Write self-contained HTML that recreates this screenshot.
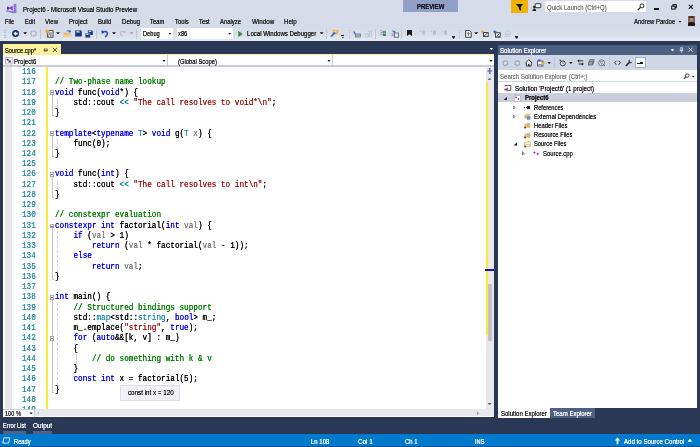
<!DOCTYPE html>
<html lang="en"><head><meta charset="utf-8"><title>Project6 - Microsoft Visual Studio Preview</title>
<style>
*{margin:0;padding:0;box-sizing:border-box}
html,body{width:700px;height:447px;overflow:hidden;background:#D6DBE9}
body{position:relative;font-family:"Liberation Sans",sans-serif;-webkit-font-smoothing:antialiased}
.a,.t,i{position:absolute;display:block}
.t{white-space:pre;font-style:normal;text-shadow:0 0 0.5px currentColor;transform-origin:0 50%}
#txt{position:absolute;left:0;top:0;width:700px;height:447px;will-change:transform}
svg{position:absolute;overflow:visible}
/* editor */
#ed{will-change:transform;position:absolute;left:3px;top:66px;width:482.5px;height:343.2px;background:#fff;overflow:hidden}
.ln{text-shadow:0 0 0.3px currentColor;position:absolute;left:0;height:10.242px;line-height:10.242px;white-space:pre;font-family:"Liberation Mono",monospace;font-size:8.25px;color:#000;width:480px}
.no{position:absolute;left:18.9px;color:#2B91AF;transform-origin:0 50%;transform:scaleX(0.9312)}
.cd{position:absolute;left:51.8px;transform-origin:0 50%;transform:scaleX(0.9312)}
.k{color:#0000FF}.c{color:#008000}.s{color:#A31515}.y{color:#2B91AF}.p{color:#808080}.o{color:#008080}
.fold{left:46.7px;width:4.6px;height:4.6px;border:0.8px solid #A8A8A8;background:#fff}
.fold:after{content:"";position:absolute;left:0.6px;right:0.6px;top:1.1px;height:0.8px;background:#777}
.og{left:48.9px;width:2.2px;border-left:0.8px solid #C4C4C4;border-bottom:0.8px solid #C4C4C4}
.sg{width:0;border-left:0.8px dashed #D4D4D4}
.grip{width:1.6px;height:9px;background:repeating-linear-gradient(#B4BCD1 0 0.8px,transparent 0.8px 1.8px)}
.td,.dd{clip-path:polygon(0 0,100% 0,50% 100%)}
.tu{clip-path:polygon(0 100%,100% 100%,50% 0)}
.tl{clip-path:polygon(100% 0,100% 100%,0 50%)}
.tr{clip-path:polygon(0 0,0 100%,100% 50%)}
.dd{width:3.8px;height:2.2px;background:#0A0A0A;margin:-0.1px 0 0 -0.3px}
.sep{top:28.8px;width:0.9px;height:10px;background:#BFC6D8}
.ov{width:3px;height:0.8px;background:#1E1E1E}
.ov:after{content:"";position:absolute;left:-0.1px;top:1.5px;width:3.2px;height:1.8px;background:#1E1E1E;clip-path:polygon(0 0,100% 0,50% 100%)}
.ex{width:3.4px;height:3.4px;background:#1E1E1E;clip-path:polygon(100% 0,100% 100%,0 100%)}
.co{width:2.8px;height:4.4px;background:#3A3A3A;clip-path:polygon(0 0,100% 50%,0 100%,0 0,22% 22%,22% 78%,70% 50%,22% 22%)}
</style></head><body>

<!-- ===== title bar ===== -->
<svg style="left:5px;top:3px" width="13" height="11" viewBox="5 3 13 11"><path d="M6.4 5.6 L14 4.2 V12.2 L6.4 10.6 Z" fill="#DCD2F2"/><path d="M13.6 4 L16.4 3.7 V13 L13.6 12.4 Z" fill="#9377D2"/><path d="M6.2 10.2 L14 11.6 L16.4 13 L13.4 13.2 L6.2 11.4 Z" fill="#8E72CE"/><path d="M12.6 5.9 V10.4 L9.6 8.6 L8 9.9 L7 9.5 V6.8 L8 6.4 L9.6 7.7 Z" fill="#5A2CA6"/><path d="M11.4 7.4 V8.9 L10.4 8.15 Z" fill="#DCD2F2"/></svg>
<div class="a" style="left:403px;top:0;width:55px;height:12px;background:#929FC6"></div>
<div class="a" style="left:510.7px;top:0;width:17.2px;height:13.1px;background:#F0B400"></div>
<svg style="left:514.5px;top:2.5px" width="9" height="9" viewBox="0 0 9 9"><path d="M0.8 1 H8.2 L5.6 4.2 L6.2 8 L4 6.2 L3.8 4.2 Z" fill="#111"/></svg>
<svg style="left:531.5px;top:2.5px" width="10" height="9" viewBox="0 0 10 9"><rect x="3.2" y="0.7" width="5.6" height="4" rx="0.8" fill="#F4F4F8" stroke="#222" stroke-width="0.9"/><circle cx="2.3" cy="4" r="1.2" fill="#222"/><path d="M0.4 8 Q0.4 5.6 2.3 5.6 Q4.2 5.6 4.2 8 Z" fill="#222"/></svg>
<div class="a" style="left:545px;top:1.4px;width:101px;height:10.8px;background:#fff"></div>
<svg style="left:636.5px;top:3px" width="8" height="8" viewBox="0 0 8 8"><circle cx="5" cy="2.9" r="2" fill="none" stroke="#222" stroke-width="0.95"/><path d="M3.5 4.4 L0.9 7" stroke="#222" stroke-width="1.2"/></svg>
<div class="a" style="left:654px;top:7.9px;width:5.2px;height:1.7px;background:#111"></div>
<svg style="left:670.6px;top:4px" width="6.2" height="6.2" viewBox="0 0 8 8"><rect x="2.5" y="0.9" width="4.4" height="3.8" fill="none" stroke="#111" stroke-width="1.3"/><rect x="0.9" y="2.8" width="4.4" height="3.8" fill="#D6DBE9" stroke="#111" stroke-width="1.3"/></svg>
<svg style="left:688.4px;top:4.4px" width="6" height="6" viewBox="0 0 7 7"><path d="M1 1 L5.6 5.6 M5.6 1 L1 5.6" stroke="#111" stroke-width="1.3"/></svg>
<i class="td" style="left:678.3px;top:20.8px;width:3.4px;height:2.0px;background:#222"></i>
<!-- avatar -->
<div class="a" style="left:687.8px;top:16.2px;width:7.3px;height:10px;background:#7A6560;overflow:hidden">
 <div class="a" style="left:2px;top:0.8px;width:3.6px;height:4.6px;border-radius:50%;background:#C48A6C"></div>
 <div class="a" style="left:1.6px;top:0.3px;width:4.2px;height:2px;border-radius:50% 50% 0 0;background:#4A2E22"></div>
 <div class="a" style="left:0.2px;top:5.6px;width:7px;height:5px;border-radius:45% 45% 0 0;background:#1B1B1F"></div>
</div>

<!-- ===== toolbar ===== -->
<div class="a" style="left:0;top:27px;width:700px;height:14px;background:linear-gradient(#D6DBE9 0%,#D9DEEB 55%,#E5E9F3 100%)"></div>
<div id="tb"><!-- grips -->
<i class="grip" style="left:4px;top:29.5px"></i>
<i class="grip" style="left:348.8px;top:29.5px"></i>
<i class="grip" style="left:458.6px;top:29.5px"></i>
<!-- back / forward -->
<svg style="left:12.1px;top:29.6px" width="7.2" height="7.2" viewBox="0 0 8 8"><circle cx="4" cy="4" r="3.9" fill="#10308C"/><path d="M1.5 4 L4.2 1.7 V3.1 H6.4 V4.9 H4.2 V6.3 Z" fill="#fff"/></svg>
<i class="dd" style="left:23.5px;top:32.4px"></i>
<svg style="left:30.4px;top:29.6px" width="7" height="7" viewBox="0 0 7 7"><circle cx="3.5" cy="3.5" r="2.6" fill="#DADFEA" stroke="#AEB3C2" stroke-width="1.3"/></svg>
<i class="sep" style="left:40.3px"></i>
<!-- new project -->
<svg style="left:45px;top:29px" width="9" height="9" viewBox="0 0 9 9"><rect x="2.6" y="1.6" width="5.4" height="6.6" fill="#F6F6F6" stroke="#3A3A3A" stroke-width="0.9"/><path d="M3.6 4 H7 M3.6 6 H7" stroke="#3A3A3A" stroke-width="0.8"/><circle cx="2.4" cy="2.4" r="2" fill="#E8A33A"/><circle cx="4.4" cy="6.8" r="1.3" fill="#fff" stroke="#3A3A3A" stroke-width="0.5"/></svg>
<i class="dd" style="left:56.4px;top:32.4px"></i>
<!-- open -->
<svg style="left:62.6px;top:29px" width="9" height="9" viewBox="0 0 9 9"><path d="M0.6 3.6 H3.4 L4.2 4.4 H8.2 V8 H0.6 Z" fill="#E9B55C"/><path d="M1.4 5.4 H8.6 L7.8 8 H0.6 Z" fill="#F6D28C"/><path d="M3.2 2.8 Q4.6 0.6 6.6 1.6 L7 0.6 L8 3.2 L5.4 3.4 L6 2.6 Q4.8 2 3.2 2.8 Z" fill="#1F5FBF"/></svg>
<!-- save -->
<svg style="left:74.8px;top:30.4px" width="7" height="7" viewBox="0 0 7 7"><path d="M0.2 0.2 H5.6 L6.8 1.4 V6.6 H0.2 Z" fill="#13367F"/><rect x="1.5" y="0.6" width="3.4" height="2" fill="#D6DBE9"/><rect x="3.7" y="0.8" width="0.9" height="1.5" fill="#13367F"/></svg>
<!-- save all -->
<svg style="left:85.2px;top:29.6px" width="8" height="8" viewBox="0 0 8 8"><path d="M2.8 0.2 H6.8 L7.8 1.2 V5 H2.8 Z" fill="#13367F"/><rect x="3.8" y="0.5" width="2.4" height="1.5" fill="#D6DBE9"/><path d="M0.2 3 H4.2 L5.2 4 V7.8 H0.2 Z" fill="#13367F" stroke="#D3D9E7" stroke-width="0.5"/><rect x="1.2" y="3.4" width="2.4" height="1.5" fill="#D6DBE9"/></svg>
<i class="sep" style="left:96.3px"></i>
<!-- undo / redo -->
<svg style="left:100.6px;top:29.8px" width="8" height="8" viewBox="0 0 8 8"><path d="M1.8 2.6 Q4.8 0.4 6.2 2.6 Q7.2 4.6 4 7" fill="none" stroke="#1B4FB8" stroke-width="1.5"/><path d="M0.2 0.6 L3.6 1.2 L1 4.2 Z" fill="#1B4FB8"/></svg>
<i class="dd" style="left:112.4px;top:32.4px"></i>
<svg style="left:118.8px;top:30.2px" width="7" height="7" viewBox="0 0 7 7"><path d="M5.4 2.4 Q3 0.6 1.6 2.6 Q0.8 4.4 3.4 6.4" fill="none" stroke="#B9BECC" stroke-width="1.1"/><path d="M6.8 0.6 L4 1.2 L6.2 3.8 Z" fill="#B9BECC"/></svg>
<i class="dd" style="left:130px;top:32.4px;background:#9A9FAE"></i>
<i class="sep" style="left:136.2px"></i>
<!-- combos -->
<div class="a" style="left:140.7px;top:28px;width:32.4px;height:11px;background:#fff"></div>
<i class="dd" style="left:168.4px;top:32.6px"></i>
<div class="a" style="left:176.5px;top:28px;width:56.1px;height:11px;background:#fff"></div>
<i class="dd" style="left:228.2px;top:32.6px"></i>
<!-- run -->
<svg style="left:238.4px;top:30.6px" width="5" height="6" viewBox="0 0 5 6"><path d="M0.3 0.1 L4.7 3 L0.3 5.9 Z" fill="#2B8A2B"/></svg>
<i class="dd" style="left:320px;top:32.4px"></i>
<i class="sep" style="left:325.5px"></i>
<svg style="left:329.6px;top:29.4px" width="9" height="8" viewBox="0 0 9 8"><path d="M3 0.4 L8.8 1.6 L7.6 5.4 L2.4 4.4 Z" fill="#F2B04A"/><path d="M0.4 7.4 L3.8 3 L5.6 4.2 L2 7.8 Z" fill="#2D64C8"/><path d="M4.2 2.2 L7 2.8" stroke="#FBE3B0" stroke-width="0.8"/></svg>
<i class="ov" style="left:341.4px;top:35px"></i>
<!-- 2nd toolbar -->
<svg style="left:353.4px;top:29.8px" width="8" height="8" viewBox="0 0 8 8"><path d="M0.6 0.4 L3 3.4 L1.6 3.6 L1 5 Z" fill="#1F5FBF"/><rect x="2.6" y="4" width="5" height="3" fill="#C9CEDB" stroke="#5A6070" stroke-width="0.7"/><path d="M3.6 5.5 H6.6" stroke="#5A6070" stroke-width="0.6"/></svg>
<svg style="left:364.8px;top:29.8px" width="8" height="8" viewBox="0 0 8 8"><path d="M0.6 3.8 H3.4 V7.2 H0.6 Z M4.6 1 V7.2 M6.4 1 V7.2 M3.4 1 H7.4" fill="none" stroke="#B9BECC" stroke-width="0.8"/></svg>
<i class="sep" style="left:375.2px"></i>
<svg style="left:380.4px;top:30.4px" width="7" height="7" viewBox="0 0 7 7"><path d="M0.4 0.8 H2.4 M0.4 2.6 H2.4 M0.4 4.4 H2.4" stroke="#6A7080" stroke-width="0.6"/><rect x="2.8" y="0.8" width="3.2" height="5.2" fill="#3A8A55"/><path d="M3.4 2 H5.6 M3.4 3.6 H5.6" stroke="#CDEBD2" stroke-width="0.6"/></svg>
<svg style="left:391.2px;top:30px" width="8" height="8" viewBox="0 0 8 8"><path d="M0.4 1.4 Q2 -0.2 3.6 1.2 L4.2 0.6 V2.8 H2 L2.8 2 Q2 1.2 0.4 1.4 Z" fill="#1F6FCF"/><rect x="3.4" y="3" width="4" height="4.2" fill="#E4E7EF" stroke="#454B5A" stroke-width="0.7"/><path d="M0.6 4 H2.6 M0.6 5.6 H2.6" stroke="#454B5A" stroke-width="0.6"/></svg>
<i class="sep" style="left:401.3px"></i>
<svg style="left:407px;top:30.3px" width="5" height="6" viewBox="0 0 5 6"><path d="M0 0 H5 V6 L2.5 4.2 L0 6 Z" fill="#1A1A1A"/></svg>
<svg style="left:418.6px;top:30.4px" width="7" height="6" viewBox="0 0 7 6"><path d="M3 0.4 H6 V5.2 L4.5 4 L3 5.2 Z" fill="#BCC1CF"/><path d="M0.4 1.4 H2 M1.2 0.6 V2.2" stroke="#BCC1CF" stroke-width="0.7"/></svg>
<svg style="left:429.6px;top:30.4px" width="7" height="6" viewBox="0 0 7 6"><path d="M3 0.4 H6 V5.2 L4.5 4 L3 5.2 Z" fill="#BCC1CF"/><path d="M0.4 1.4 H2 M1.2 0.6 V2.2" stroke="#BCC1CF" stroke-width="0.7"/></svg>
<svg style="left:440.8px;top:30.4px" width="7" height="6" viewBox="0 0 7 6"><path d="M3 0.4 H6 V5.2 L4.5 4 L3 5.2 Z" fill="#BCC1CF"/><path d="M0.4 0.6 L2 2.2 M2 0.6 L0.4 2.2" stroke="#BCC1CF" stroke-width="0.7"/></svg>
<i class="ov" style="left:452px;top:35.6px"></i>
<!-- 3rd toolbar -->
<svg style="left:464.8px;top:29.8px" width="7" height="8" viewBox="0 0 7 8"><path d="M0.6 0.5 H4.4 L6.2 2.2 V7.3 H0.6 Z" fill="#F4F5F8" stroke="#2A2A2A" stroke-width="0.9"/><path d="M3.4 2.6 V5.8 M2.2 3.8 L3.4 2.6 L4.6 3.8" fill="none" stroke="#2A2A2A" stroke-width="0.7"/></svg>
<i class="dd" style="left:474.6px;top:32.4px"></i>
<svg style="left:481.4px;top:29.8px" width="8" height="8" viewBox="0 0 8 8"><circle cx="1.6" cy="1.8" r="1.4" fill="#E8A33A"/><rect x="2.4" y="2.6" width="4.8" height="3.8" fill="#EDEFF5" stroke="#2E2E2E" stroke-width="0.9"/><path d="M3 6.2 L6.6 2.8" stroke="#2E2E2E" stroke-width="0.8"/></svg>
<svg style="left:492.6px;top:29.6px" width="8" height="8" viewBox="0 0 8 8"><path d="M1.8 0.2 V3.4 M0.2 1.8 H3.4" stroke="#1F5FBF" stroke-width="1.1"/><rect x="2.6" y="2.8" width="4.6" height="4.4" fill="#EDEFF5" stroke="#2E2E2E" stroke-width="0.9"/><path d="M3.6 6.4 L6.4 3.6 M4.6 6.6 H6.6" stroke="#2E2E2E" stroke-width="0.7"/></svg>
<svg style="left:503.6px;top:30px" width="8" height="8" viewBox="0 0 8 8"><rect x="1.6" y="1" width="5" height="3.6" rx="1" fill="none" stroke="#C0C5D2" stroke-width="0.9"/><path d="M0.6 6.4 H6 M2 5.2 L4.6 3" stroke="#C0C5D2" stroke-width="0.8"/></svg>
<i class="ov" style="left:515.2px;top:35.6px"></i>
</div>

<!-- ===== navy frame ===== -->
<div class="a" style="left:0;top:41px;width:700px;height:392.8px;background:#293955"></div>

<!-- document tab -->
<div class="a" style="left:3px;top:44.2px;width:58.2px;height:11px;background:#FFF29D"></div>
<div class="a" style="left:3px;top:53.7px;width:491px;height:1.5px;background:#FFF29D"></div>
<svg style="left:43.3px;top:47.6px" width="5" height="4" viewBox="0 0 5 4"><path d="M0.2 2 H1.6 M1.6 0.5 V3.5 M1.6 1 H4.3 V3 H1.6 M1.6 2.6 H4.3" stroke="#3A3A3A" stroke-width="0.65" fill="none"/></svg>
<svg style="left:52px;top:47.4px" width="6" height="6" viewBox="0 0 6 6"><path d="M0.8 0.8 L5 5 M5 0.8 L0.8 5" stroke="#333" stroke-width="0.9"/></svg>
<i class="td" style="left:489.3px;top:47.6px;width:4.2px;height:2.4px;background:#fff"></i>

<!-- nav bar -->
<div class="a" style="left:3px;top:55.2px;width:491px;height:11.5px;background:#C9CCD6"></div>
<div class="a" style="left:3px;top:55.2px;width:164.3px;height:9.8px;background:#fff"></div>
<div class="a" style="left:168.3px;top:55.2px;width:164px;height:9.8px;background:#fff"></div>
<div class="a" style="left:333.3px;top:55.2px;width:160.7px;height:9.8px;background:#fff"></div>
<i class="td" style="left:162.4px;top:60px;width:3.2px;height:1.9px;background:#222"></i>
<i class="td" style="left:327.4px;top:60px;width:3.2px;height:1.9px;background:#222"></i>
<i class="td" style="left:489.4px;top:60px;width:3.2px;height:1.9px;background:#222"></i>
<svg style="left:5px;top:56.8px" width="8" height="8" viewBox="0 0 8 8"><rect x="0.5" y="0.5" width="6.8" height="6.4" fill="#fff" stroke="#CFA2CF" stroke-width="0.9"/><path d="M1.6 1.8 H3.6 V3.6 H1.6 Z M3.6 3.6 H5.8 V5.6 H3.6 Z" fill="#2A2A2A"/></svg>

<!-- editor -->
<div id="ed">
 <div class="a" style="left:2.3px;top:0;width:6.7px;height:344px;background:#E6E7EB"></div>
 <div class="a" style="left:43.1px;top:0;width:2.2px;height:344px;background:#FFE838"></div>
<i class="og" style="top:29.05px;height:21.08px"></i>
<i class="og" style="top:70.02px;height:21.08px"></i>
<i class="og" style="top:110.99px;height:21.08px"></i>
<i class="og" style="top:162.20px;height:51.81px"></i>
<i class="og" style="top:233.89px;height:92.78px"></i>
<i class="og" style="top:274.86px;height:31.33px;border-bottom:none"></i>
<i class="sg" style="left:54.20px;top:31.77px;height:10.24px"></i>
<i class="sg" style="left:54.20px;top:72.74px;height:10.24px"></i>
<i class="sg" style="left:54.20px;top:113.71px;height:10.24px"></i>
<i class="sg" style="left:54.20px;top:164.92px;height:40.97px"></i>
<i class="sg" style="left:54.20px;top:236.62px;height:81.94px"></i>
<i class="sg" style="left:72.64px;top:287.83px;height:10.24px"></i>
<div class="ln" style="top:1.05px"><span class="no">116</span><span class="cd"></span></div>
<div class="ln" style="top:11.29px"><span class="no">117</span><span class="cd"><span class="c">// Two-phase name lookup</span></span></div>
<div class="ln" style="top:21.53px"><span class="no">118</span><span class="cd"><span class="k">void</span> func(<span class="k">void</span>*) {</span></div>
<i class="fold" style="top:24.35px"></i>
<div class="ln" style="top:31.78px"><span class="no">119</span><span class="cd">    std::cout <span class="o">&lt;&lt;</span> <span class="s">&quot;The call resolves to void*\n&quot;</span>;</span></div>
<div class="ln" style="top:42.02px"><span class="no">120</span><span class="cd">}</span></div>
<div class="ln" style="top:52.26px"><span class="no">121</span><span class="cd"></span></div>
<div class="ln" style="top:62.50px"><span class="no">122</span><span class="cd"><span class="k">template</span>&lt;<span class="k">typename</span> <span class="y">T</span>&gt; <span class="k">void</span> g(<span class="y">T</span> <span class="p">x</span>) {</span></div>
<i class="fold" style="top:65.32px"></i>
<div class="ln" style="top:72.74px"><span class="no">123</span><span class="cd">    func(0);</span></div>
<div class="ln" style="top:82.98px"><span class="no">124</span><span class="cd">}</span></div>
<div class="ln" style="top:93.23px"><span class="no">125</span><span class="cd"></span></div>
<div class="ln" style="top:103.47px"><span class="no">126</span><span class="cd"><span class="k">void</span> func(<span class="k">int</span>) {</span></div>
<i class="fold" style="top:106.29px"></i>
<div class="ln" style="top:113.71px"><span class="no">127</span><span class="cd">    std::cout <span class="o">&lt;&lt;</span> <span class="s">&quot;The call resolves to int\n&quot;</span>;</span></div>
<div class="ln" style="top:123.95px"><span class="no">128</span><span class="cd">}</span></div>
<div class="ln" style="top:134.20px"><span class="no">129</span><span class="cd"></span></div>
<div class="ln" style="top:144.44px"><span class="no">130</span><span class="cd"><span class="c">// constexpr evaluation</span></span></div>
<div class="ln" style="top:154.68px"><span class="no">131</span><span class="cd"><span class="k">constexpr</span> <span class="k">int</span> factorial(<span class="k">int</span> <span class="p">val</span>) {</span></div>
<i class="fold" style="top:157.50px"></i>
<div class="ln" style="top:164.92px"><span class="no">132</span><span class="cd">    <span class="k">if</span> (<span class="p">val</span> &gt; 1)</span></div>
<div class="ln" style="top:175.16px"><span class="no">133</span><span class="cd">        <span class="k">return</span> (<span class="p">val</span> * factorial(<span class="p">val</span> - 1));</span></div>
<div class="ln" style="top:185.41px"><span class="no">134</span><span class="cd">    <span class="k">else</span></span></div>
<div class="ln" style="top:195.65px"><span class="no">135</span><span class="cd">        <span class="k">return</span> <span class="p">val</span>;</span></div>
<div class="ln" style="top:205.89px"><span class="no">136</span><span class="cd">}</span></div>
<div class="ln" style="top:216.13px"><span class="no">137</span><span class="cd"></span></div>
<div class="ln" style="top:226.37px"><span class="no">138</span><span class="cd"><span class="k">int</span> main() {</span></div>
<i class="fold" style="top:229.19px"></i>
<div class="ln" style="top:236.62px"><span class="no">139</span><span class="cd">    <span class="c">// Structured bindings support</span></span></div>
<div class="ln" style="top:246.86px"><span class="no">140</span><span class="cd">    std::<span class="y">map</span>&lt;std::<span class="y">string</span>, <span class="k">bool</span>&gt; m_;</span></div>
<div class="ln" style="top:257.10px"><span class="no">141</span><span class="cd">    m_.emplace(<span class="s">&quot;string&quot;</span>, <span class="k">true</span>);</span></div>
<div class="ln" style="top:267.34px"><span class="no">142</span><span class="cd">    <span class="k">for</span> (<span class="k">auto</span>&amp;&amp;[k, v] : m_)</span></div>
<i class="fold" style="top:270.16px"></i>
<div class="ln" style="top:277.58px"><span class="no">143</span><span class="cd">    {</span></div>
<div class="ln" style="top:287.83px"><span class="no">144</span><span class="cd">        <span class="c">// do something with k &amp; v</span></span></div>
<div class="ln" style="top:298.07px"><span class="no">145</span><span class="cd">    }</span></div>
<div class="ln" style="top:308.31px"><span class="no">146</span><span class="cd">    <span class="k">const</span> <span class="k">int</span> x = factorial(5);</span></div>
<div class="ln" style="top:318.55px"><span class="no">147</span><span class="cd">}</span></div>
<div class="ln" style="top:328.79px"><span class="no">148</span><span class="cd"></span></div>
<div class="ln" style="top:339.04px"><span class="no">149</span><span class="cd"></span></div>
 <!-- tooltip -->
 <div class="a" style="left:117.4px;top:318.6px;width:59.2px;height:16.2px;background:#F1F1F5;border:0.6px solid #DCDEE6"></div>
</div>

<!-- vertical scrollbar -->
<div class="a" style="left:485.5px;top:66px;width:8.6px;height:343.2px;background:#E8E8EC"></div>
<div class="a" style="left:485.6px;top:82.4px;width:2.3px;height:252.3px;background:#FFE838"></div>
<div class="a" style="left:487.9px;top:284.2px;width:3.9px;height:56.6px;background:#C2C3C9"></div>
<div class="a" style="left:485.3px;top:269.3px;width:8.4px;height:1.4px;background:#1414C8"></div>
<svg style="left:486.9px;top:68px" width="5.6" height="6.4" viewBox="0 0 7 8"><path d="M3.5 0.4 V7.2 M0.5 3.8 H6.5" stroke="#3D5A99" stroke-width="1.3"/><path d="M3.5 0 L5 1.7 H2 Z M3.5 7.6 L5 5.9 H2 Z" fill="#3D5A99"/></svg>
<i class="tu" style="left:487.6px;top:78px;width:4.0px;height:2.3px;background:#56607C"></i>
<i class="td" style="left:487.6px;top:403px;width:4.0px;height:2.3px;background:#56607C"></i>

<div class="a" style="left:3px;top:65px;width:491px;height:1.7px;background:#C9CCD6"></div>
<!-- horizontal scrollbar row -->
<div class="a" style="left:3px;top:409.2px;width:491px;height:8.3px;background:#fff"></div>
<div class="a" style="left:3px;top:409.2px;width:491px;height:7px;background:#E8E8EC"></div>
<div class="a" style="left:3px;top:409.2px;width:31.5px;height:8.2px;background:#fff;border:0.6px solid #C8CCD8;border-left:0;border-bottom:0"></div>
<i class="td" style="left:29.4px;top:412.4px;width:3.4px;height:2.1px;background:#111"></i>
<i class="tl" style="left:37px;top:411.4px;width:2.1px;height:3.8px;background:#C0C2CC"></i>
<i class="tr" style="left:477px;top:411.4px;width:2.1px;height:3.8px;background:#9A9CA8"></i>

<!-- bottom tabs -->
<div class="a" style="left:3px;top:431.1px;width:23.4px;height:2.6px;background:#50628A"></div>
<div class="a" style="left:33px;top:431.1px;width:19.4px;height:2.6px;background:#50628A"></div>

<!-- ===== solution explorer ===== -->
<div class="a" style="left:498px;top:44.5px;width:198.8px;height:10.5px;background:#4D6082"></div>
<div class="a" style="left:498px;top:55px;width:198.8px;height:15.2px;background:#CFD6E5"></div>
<div class="a" style="left:498px;top:70.2px;width:198.8px;height:337.8px;background:#fff"></div>
<div class="a" style="left:498px;top:80.7px;width:198.8px;height:1.6px;background:#CFD6E5"></div>
<div class="a" style="left:498px;top:93.1px;width:198.8px;height:8.6px;background:#CCCEDB"></div>
<div class="a" style="left:498px;top:408px;width:52px;height:9.6px;background:#fff"></div>
<div class="a" style="left:550.2px;top:408.2px;width:44.4px;height:9.4px;background:#4D6082"></div>
<!-- title icons -->
<i class="td" style="left:670.6px;top:49.2px;width:3.8px;height:2.2px;background:#fff"></i>
<svg style="left:678.9px;top:46.8px" width="5" height="7" viewBox="0 0 6 8"><path d="M1.6 0.6 H4.2 V4 H1.6 Z M0.6 4.2 H5.2 M2.9 4.2 V7.2 M3.6 0.8 V4" stroke="#E8ECF4" stroke-width="0.75" fill="none"/></svg>
<svg style="left:687.6px;top:47.4px" width="5.4" height="5.4" viewBox="0 0 6 6"><path d="M0.7 0.7 L5.1 5.1 M5.1 0.7 L0.7 5.1" stroke="#F0F3F8" stroke-width="0.9"/></svg>
<div id="se"><!-- SE toolbar -->
<svg style="left:502.4px;top:59.6px" width="7" height="7" viewBox="0 0 7 7"><circle cx="3.3" cy="3.2" r="2.3" fill="#D9DEE9" stroke="#A4A9B8" stroke-width="1.3"/></svg>
<svg style="left:513.8px;top:59.6px" width="7" height="7" viewBox="0 0 7 7"><circle cx="3.3" cy="3.2" r="2.3" fill="#D9DEE9" stroke="#A4A9B8" stroke-width="1.3"/></svg>
<svg style="left:525px;top:58.8px" width="8" height="8" viewBox="0 0 8 8"><path d="M0.4 4 L3.8 0.7 L7.2 4 M1.4 3.6 V7 H6.2 V3.6" fill="#fff" stroke="#1E1E1E" stroke-width="0.9"/><rect x="3.1" y="4.8" width="1.4" height="2.2" fill="#1E1E1E"/></svg>
<svg style="left:536.6px;top:58.8px" width="8" height="8" viewBox="0 0 8 8"><rect x="0.5" y="2" width="5.4" height="5" fill="#F3F4F8" stroke="#3B4252" stroke-width="0.8"/><rect x="1" y="0.4" width="2.6" height="2" fill="#2F6FD0"/><rect x="4.2" y="3" width="3.4" height="2.4" fill="#E9B040"/><path d="M1.4 5.6 H4.6" stroke="#3B4252" stroke-width="0.6"/></svg>
<i class="dd" style="left:547.6px;top:62px"></i>
<i class="sep" style="left:553.6px;top:57.4px;height:10.6px"></i>
<svg style="left:559.2px;top:58.6px" width="7" height="8" viewBox="0 0 7 8"><circle cx="3.8" cy="4.4" r="2.5" fill="#EEF0F6" stroke="#2A2A2A" stroke-width="0.9"/><path d="M3.8 3 V4.5 L4.9 5.2" stroke="#2A2A2A" stroke-width="0.6" fill="none"/><path d="M0.3 0.6 L2.4 1 L1.1 2.6 Z" fill="#2A2A2A"/></svg>
<i class="dd" style="left:569.2px;top:62px"></i>
<svg style="left:576.6px;top:59.2px" width="7" height="7" viewBox="0 0 7 7"><path d="M1.6 1.8 H6.2 M6.2 5 H1.6" stroke="#1E1E1E" stroke-width="0.9"/><path d="M0.2 1.8 L2.2 0.2 V3.4 Z M6.8 5 L4.8 3.4 V6.6 Z" fill="#1E1E1E"/></svg>
<svg style="left:587.6px;top:59.4px" width="7" height="7" viewBox="0 0 7 7"><rect x="2" y="0.6" width="4.2" height="3.8" fill="#C4C8D4" stroke="#4A4F5E" stroke-width="0.7" transform="skewX(-12)"/><rect x="1.6" y="2.2" width="4.2" height="3.8" fill="#9DA2B0" stroke="#4A4F5E" stroke-width="0.7" transform="skewX(-12)"/></svg>
<svg style="left:598px;top:58.8px" width="8" height="8" viewBox="0 0 8 8"><circle cx="3.6" cy="3.8" r="3" fill="#E6E9F1" stroke="#555B6B" stroke-width="0.8"/><path d="M2 2.6 H5.2 L3.6 5.6 Z" fill="none" stroke="#555B6B" stroke-width="0.6"/><path d="M5.2 5.4 L7 7.2" stroke="#555B6B" stroke-width="0.9"/></svg>
<i class="sep" style="left:609.4px;top:57.4px;height:10.6px"></i>
<svg style="left:613.8px;top:60.2px" width="7" height="6" viewBox="0 0 7 6"><path d="M2.4 0.8 L0.6 2.8 L2.4 4.8 M4.6 0.8 L6.4 2.8 L4.6 4.8" fill="none" stroke="#1E1E1E" stroke-width="0.9"/></svg>
<svg style="left:624.8px;top:58.8px" width="8" height="8" viewBox="0 0 8 8"><path d="M0.9 7 L4.2 3.6" stroke="#1E1E1E" stroke-width="1.5"/><path d="M4.8 0.6 Q3 1 3.6 3 L5 4.2 Q7 4.6 7.2 2.8 L5.8 3.4 L4.6 2.2 Z" fill="#1E1E1E"/></svg>
<div class="a" style="left:634.5px;top:56.6px;width:11px;height:11.6px;background:#FDFDFE;border:0.8px solid #9FB0D0"></div>
<div class="a" style="left:636.6px;top:62.9px;width:3.8px;height:0.9px;background:#1E1E1E"></div>
<div class="a" style="left:640.2px;top:62.2px;width:3.2px;height:2.1px;background:#1E1E1E"></div>
<!-- search icons -->
<svg style="left:683px;top:72.6px" width="7" height="7" viewBox="0 0 7 7"><circle cx="4.2" cy="2.6" r="1.8" fill="none" stroke="#2A2A2A" stroke-width="0.85"/><path d="M2.9 3.9 L0.8 6" stroke="#2A2A2A" stroke-width="1.05"/></svg>
<i class="dd" style="left:692.2px;top:76px;width:2.8px;height:1.6px"></i>
<!-- tree -->
<svg style="left:503.6px;top:85.4px" width="8" height="7" viewBox="0 0 8 7"><path d="M1 1.6 V0.6 H6.8 V5.4 H4.2" fill="none" stroke="#2A2A2A" stroke-width="0.8"/><path d="M3.4 2.6 L3.9 2.8 V6.2 L3.4 6.4 L1.6 4.9 L0.8 5.5 L0.3 5.3 V3.7 L0.8 3.5 L1.6 4.1 Z" fill="#7A3FA8"/></svg>
<i class="ex" style="left:503.8px;top:96.6px"></i>
<svg style="left:514.2px;top:94.8px" width="7" height="7" viewBox="0 0 7 7"><rect x="0.4" y="0.4" width="6" height="6" fill="#fff" stroke="#B9A9C8" stroke-width="0.7"/><path d="M1.2 2.4 H3 M2.1 1.5 V3.3 M3.6 4 H5.4 M4.5 3.1 V4.9" stroke="#7A2FA0" stroke-width="0.8"/></svg>
<i class="co" style="left:512.8px;top:105.2px"></i>
<div class="a" style="left:523.6px;top:106.6px;width:1.5px;height:1.5px;background:#1E1E1E"></div>
<div class="a" style="left:525.6px;top:106.6px;width:1.2px;height:1.5px;background:#1E1E1E"></div>
<div class="a" style="left:527.2px;top:105.8px;width:2.9px;height:3px;background:#1E1E1E"></div>
<i class="co" style="left:512.8px;top:114.4px"></i>
<svg style="left:523.8px;top:113.2px" width="7" height="7" viewBox="0 0 7 7"><path d="M0.4 1.6 H2.6 L3.2 0.8 H6.2 V5.6 H0.4 Z" fill="#E6A85A"/><path d="M0.4 2.6 H6.2" stroke="#F5D7A6" stroke-width="0.7"/><rect x="3" y="3.4" width="3.4" height="3.2" fill="#3F9BE0"/></svg>
<svg style="left:523.8px;top:122.4px" width="7" height="7" viewBox="0 0 7 7"><path d="M0.6 1.8 H2.8 L3.4 1 H6.2 V5.8 H0.6 Z" fill="#E2B070"/><path d="M2.2 2.6 V5.8" stroke="#F3DDB8" stroke-width="0.7"/><rect x="0.2" y="4.6" width="1.8" height="1.8" fill="#5A4A38"/></svg>
<svg style="left:523.8px;top:131.6px" width="7" height="7" viewBox="0 0 7 7"><path d="M0.6 1.8 H2.8 L3.4 1 H6.2 V5.8 H0.6 Z" fill="#E2B070"/><path d="M2.2 2.6 V5.8" stroke="#F3DDB8" stroke-width="0.7"/><rect x="0.2" y="4.6" width="1.8" height="1.8" fill="#5A4A38"/></svg>
<i class="ex" style="left:513.6px;top:142.2px"></i>
<svg style="left:523.6px;top:140.8px" width="8" height="7" viewBox="0 0 8 7"><path d="M0.6 1.4 H2.8 L3.4 0.6 H6.4 V5.6 H0.6 Z" fill="#FBF3E0" stroke="#D9A85C" stroke-width="0.8"/><path d="M0.8 5.4 Q1.4 3.2 3.4 3.4 H6.2" fill="none" stroke="#D9A85C" stroke-width="0.7"/><rect x="0.2" y="4.8" width="1.6" height="1.6" fill="#5A4A38"/></svg>
<i class="co" style="left:522px;top:151.2px"></i>
<svg style="left:533px;top:150.6px" width="7" height="5" viewBox="0 0 7 5"><path d="M0.3 1.6 H2.5 M1.4 0.5 V2.7 M3.6 3 H5.8 M4.7 1.9 V4.1" stroke="#8A2FB0" stroke-width="0.9"/></svg>
</div>

<!-- ===== status bar ===== -->
<div class="a" style="left:0;top:433.7px;width:700px;height:13.3px;background:#007ACC"></div>
<div class="a" style="left:0;top:445.8px;width:700px;height:1.2px;background:#1A4F80"></div>
<svg style="left:1.6px;top:436.7px" width="8.8" height="7.6" viewBox="0 0 9 8"><path d="M1.9 0.9 H8.1 L6.9 6.4 H0.7 Z" fill="none" stroke="#fff" stroke-width="0.9"/></svg>
<svg style="left:613.5px;top:436.6px" width="7" height="8" viewBox="0 0 7 8"><path d="M3.5 0.6 L6.2 3.6 H4.3 V7.2 H2.7 V3.6 H0.8 Z" fill="#fff"/></svg>
<i class="tu" style="left:687.4px;top:438.8px;width:5px;height:3px;background:#fff"></i>

<!-- ===== all UI text ===== -->
<div id="txt">
<span class="t" style="left:22.50px;top:5.80px;font-size:6.3px;line-height:7.56px;color:#1E1E1E;transform:scaleX(0.9775);">Project6 - Microsoft Visual Studio Preview</span>
<span class="t" style="left:5.00px;top:18.10px;font-size:6.3px;line-height:7.56px;color:#1E1E1E;transform:scaleX(0.9112);">File</span>
<span class="t" style="left:25.00px;top:18.10px;font-size:6.3px;line-height:7.56px;color:#1E1E1E;transform:scaleX(0.9211);">Edit</span>
<span class="t" style="left:45.25px;top:18.10px;font-size:6.3px;line-height:7.56px;color:#1E1E1E;transform:scaleX(0.9600);">View</span>
<span class="t" style="left:68.75px;top:18.10px;font-size:6.3px;line-height:7.56px;color:#1E1E1E;transform:scaleX(0.9563);">Project</span>
<span class="t" style="left:97.50px;top:18.10px;font-size:6.3px;line-height:7.56px;color:#1E1E1E;transform:scaleX(0.9458);">Build</span>
<span class="t" style="left:121.50px;top:18.10px;font-size:6.3px;line-height:7.56px;color:#1E1E1E;transform:scaleX(0.9696);">Debug</span>
<span class="t" style="left:150.25px;top:18.10px;font-size:6.3px;line-height:7.56px;color:#1E1E1E;transform:scaleX(0.9250);">Team</span>
<span class="t" style="left:175.00px;top:18.10px;font-size:6.3px;line-height:7.56px;color:#1E1E1E;transform:scaleX(0.9349);">Tools</span>
<span class="t" style="left:199.25px;top:18.10px;font-size:6.3px;line-height:7.56px;color:#1E1E1E;transform:scaleX(0.9304);">Test</span>
<span class="t" style="left:220.25px;top:18.10px;font-size:6.3px;line-height:7.56px;color:#1E1E1E;transform:scaleX(0.9369);">Analyze</span>
<span class="t" style="left:251.75px;top:18.10px;font-size:6.3px;line-height:7.56px;color:#1E1E1E;transform:scaleX(0.9930);">Window</span>
<span class="t" style="left:284.25px;top:18.10px;font-size:6.3px;line-height:7.56px;color:#1E1E1E;transform:scaleX(0.9840);">Help</span>
<span class="t" style="left:417.30px;top:3.49px;font-size:6.5px;line-height:7.80px;color:#1B1B2B;transform:scaleX(0.9107);font-weight:bold;">PREVIEW</span>
<span class="t" style="left:547.20px;top:3.70px;font-size:6.3px;line-height:7.56px;color:#7E7E7E;transform:scaleX(0.9515);">Quick Launch (Ctrl+Q)</span>
<span class="t" style="left:633.70px;top:18.30px;font-size:6.3px;line-height:7.56px;color:#1E1E1E;transform:scaleX(0.9510);">Andrew Pardoe</span>
<span class="t" style="left:143.20px;top:30.10px;font-size:6.3px;line-height:7.56px;color:#1E1E1E;transform:scaleX(0.9049);">Debug</span>
<span class="t" style="left:178.00px;top:30.10px;font-size:6.3px;line-height:7.56px;color:#1E1E1E;transform:scaleX(0.9156);">x86</span>
<span class="t" style="left:247.00px;top:30.10px;font-size:6.3px;line-height:7.56px;color:#1E1E1E;transform:scaleX(0.9653);">Local Windows Debugger</span>
<span class="t" style="left:5.20px;top:46.90px;font-size:6.3px;line-height:7.56px;color:#1E1E1E;transform:scaleX(0.9091);">Source.cpp*</span>
<span class="t" style="left:14.20px;top:57.50px;font-size:6.3px;line-height:7.56px;color:#1E1E1E;transform:scaleX(0.9649);">Project6</span>
<span class="t" style="left:178.00px;top:57.50px;font-size:6.3px;line-height:7.56px;color:#1E1E1E;transform:scaleX(0.9281);">(Global Scope)</span>
<span class="t" style="left:500.40px;top:47.10px;font-size:6.3px;line-height:7.56px;color:#FFFFFF;transform:scaleX(0.9651);">Solution Explorer</span>
<span class="t" style="left:500.40px;top:72.90px;font-size:6.3px;line-height:7.56px;color:#7E7E7E;transform:scaleX(0.9630);">Search Solution Explorer (Ctrl+;)</span>
<span class="t" style="left:515.20px;top:85.40px;font-size:6.3px;line-height:7.56px;color:#1E1E1E;transform:scaleX(0.9857);">Solution &#x27;Project6&#x27; (1 project)</span>
<span class="t" style="left:524.70px;top:94.40px;font-size:6.3px;line-height:7.56px;color:#1E1E1E;transform:scaleX(0.9452);font-weight:bold;">Project6</span>
<span class="t" style="left:533.50px;top:103.60px;font-size:6.3px;line-height:7.56px;color:#1E1E1E;transform:scaleX(0.9156);">References</span>
<span class="t" style="left:533.50px;top:112.80px;font-size:6.3px;line-height:7.56px;color:#1E1E1E;transform:scaleX(0.9549);">External Dependencies</span>
<span class="t" style="left:533.50px;top:122.10px;font-size:6.3px;line-height:7.56px;color:#1E1E1E;transform:scaleX(0.9380);">Header Files</span>
<span class="t" style="left:533.50px;top:131.30px;font-size:6.3px;line-height:7.56px;color:#1E1E1E;transform:scaleX(0.9116);">Resource Files</span>
<span class="t" style="left:533.50px;top:140.40px;font-size:6.3px;line-height:7.56px;color:#1E1E1E;transform:scaleX(0.9225);">Source Files</span>
<span class="t" style="left:543.00px;top:149.60px;font-size:6.3px;line-height:7.56px;color:#1E1E1E;transform:scaleX(0.9351);">Source.cpp</span>
<span class="t" style="left:500.80px;top:409.50px;font-size:6.3px;line-height:7.56px;color:#1E1E1E;transform:scaleX(0.9567);">Solution Explorer</span>
<span class="t" style="left:552.60px;top:409.50px;font-size:6.3px;line-height:7.56px;color:#FFFFFF;transform:scaleX(0.9578);">Team Explorer</span>
<span class="t" style="left:4.60px;top:409.90px;font-size:6.3px;line-height:7.56px;color:#1E1E1E;transform:scaleX(0.8901);">100 %</span>
<span class="t" style="left:3.40px;top:422.10px;font-size:6.3px;line-height:7.56px;color:#FFFFFF;transform:scaleX(0.8961);">Error List</span>
<span class="t" style="left:33.00px;top:422.10px;font-size:6.3px;line-height:7.56px;color:#FFFFFF;transform:scaleX(1.0046);">Output</span>
<span class="t" style="left:14.20px;top:437.50px;font-size:6.3px;line-height:7.56px;color:#FFFFFF;transform:scaleX(0.9115);">Ready</span>
<span class="t" style="left:311.20px;top:437.50px;font-size:6.3px;line-height:7.56px;color:#FFFFFF;transform:scaleX(0.9549);">Ln 108</span>
<span class="t" style="left:357.80px;top:437.50px;font-size:6.3px;line-height:7.56px;color:#FFFFFF;transform:scaleX(0.9995);">Col 1</span>
<span class="t" style="left:405.00px;top:437.50px;font-size:6.3px;line-height:7.56px;color:#FFFFFF;transform:scaleX(0.9393);">Ch 1</span>
<span class="t" style="left:475.00px;top:437.50px;font-size:6.3px;line-height:7.56px;color:#FFFFFF;transform:scaleX(0.9046);">INS</span>
<span class="t" style="left:624.20px;top:437.50px;font-size:6.3px;line-height:7.56px;color:#FFFFFF;transform:scaleX(0.9744);">Add to Source Control</span>
<span class="t" style="left:127.50px;top:389.40px;font-size:6.3px;line-height:7.56px;color:#1E1E1E;transform:scaleX(0.9923);">const int x = 120</span>
</div>
</body></html>
